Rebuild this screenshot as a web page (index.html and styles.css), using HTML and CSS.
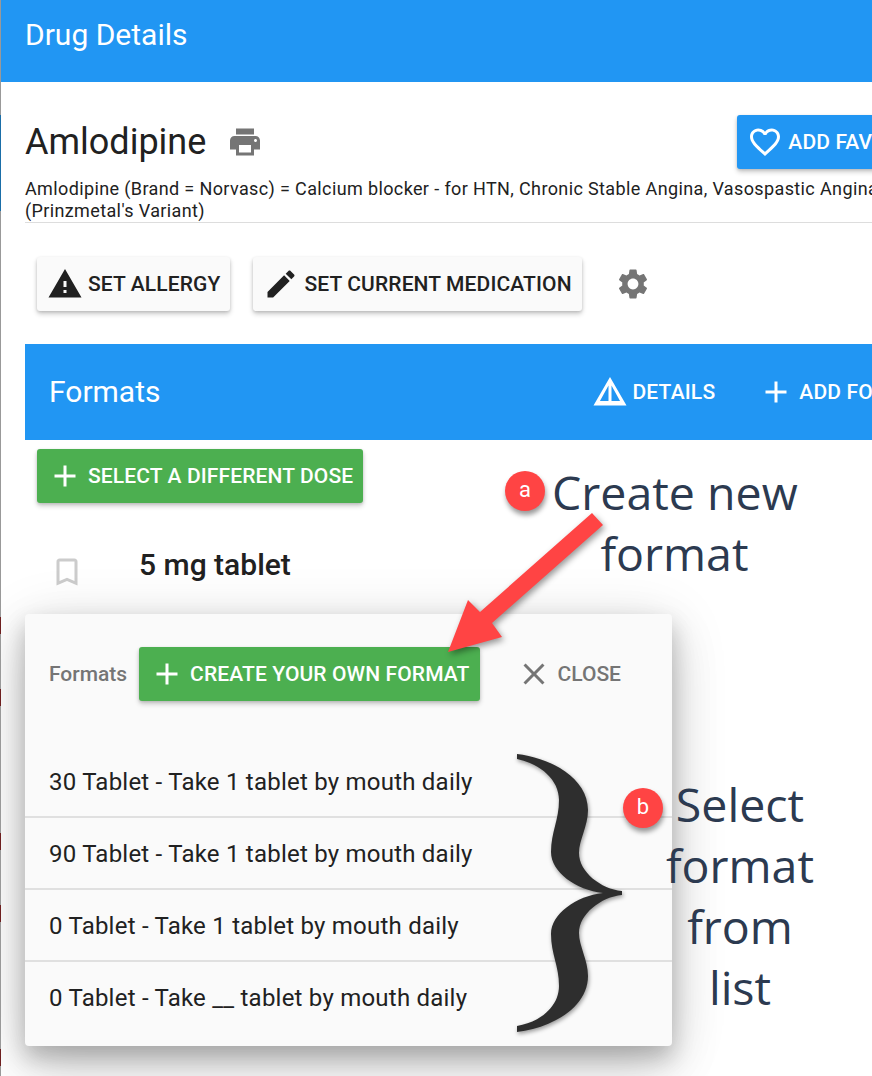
FILE: index.html
```html
<!DOCTYPE html>
<html lang="en">
<head>
    <meta charset="UTF-8">
    <title>Drug Details</title>
    <link rel="stylesheet" href="styles.css">
</head>
<body>
    <div class="page">
        <div class="header">Drug Details</div>

        <div class="content">
            <div class="title-row">
                <h1>Amlodipine</h1>
                <svg class="print-icon" viewBox="0 0 24 24"><path d="M19 8H5c-1.66 0-3 1.34-3 3v6h4v4h12v-4h4v-6c0-1.66-1.34-3-3-3zm-3 11H8v-5h8v5zm3-7c-.55 0-1-.45-1-1s.45-1 1-1 1 .45 1 1-.45 1-1 1zm-1-9H6v4h12V3z"/></svg>
                <button class="btn btn-blue btn-fav">
                    <svg viewBox="0 0 24 24"><path d="M16.5 3c-1.74 0-3.41.81-4.5 2.09C10.91 3.81 9.24 3 7.5 3 4.42 3 2 5.42 2 8.5c0 3.78 3.4 6.86 8.55 11.54L12 21.35l1.45-1.32C18.6 15.36 22 12.28 22 8.5 22 5.42 19.58 3 16.5 3zm-4.4 15.55l-.1.1-.1-.1C7.14 14.24 4 11.39 4 8.5 4 6.5 5.5 5 7.5 5c1.54 0 3.04.99 3.57 2.36h1.87C13.46 5.99 14.96 5 16.5 5c2 0 3.5 1.5 3.5 3.5 0 2.89-3.14 5.74-7.9 10.05z"/></svg>
                    ADD FAVORITE
                </button>
            </div>
            <p class="description">Amlodipine (Brand = Norvasc) = Calcium blocker - for HTN, Chronic Stable Angina, Vasospastic Angina<br>(Prinzmetal's Variant)</p>

            <div class="action-row">
                <button class="btn btn-light">
                    <svg viewBox="0 0 24 24"><path d="M1 21h22L12 2 1 21zm12-3h-2v-2h2v2zm0-4h-2v-4h2v4z"/></svg>
                    SET ALLERGY
                </button>
                <button class="btn btn-light">
                    <svg viewBox="0 0 24 24"><path d="M3 17.25V21h3.75L17.81 9.94l-3.75-3.75L3 17.25zM20.71 7.04c.39-.39.39-1.02 0-1.41l-2.34-2.34c-.39-.39-1.02-.39-1.41 0l-1.83 1.83 3.75 3.75 1.83-1.83z"/></svg>
                    SET CURRENT MEDICATION
                </button>
                <svg class="gear-icon" viewBox="0 0 24 24"><path d="M19.14 12.94c.04-.3.06-.61.06-.94 0-.32-.02-.64-.07-.94l2.03-1.58c.18-.14.23-.41.12-.61l-1.92-3.32c-.12-.22-.37-.29-.59-.22l-2.39.96c-.5-.38-1.03-.7-1.62-.94l-.36-2.54c-.04-.24-.24-.41-.48-.41h-3.84c-.24 0-.43.17-.47.41l-.36 2.54c-.59.24-1.13.57-1.62.94l-2.39-.96c-.22-.08-.47 0-.59.22L2.74 8.87c-.12.21-.08.47.12.61l2.03 1.58c-.05.3-.09.63-.09.94s.02.64.07.94l-2.03 1.58c-.18.14-.23.41-.12.61l1.92 3.32c.12.22.37.29.59.22l2.39-.96c.5.38 1.03.7 1.62.94l.36 2.54c.05.24.24.41.48.41h3.84c.24 0 .44-.17.47-.41l.36-2.54c.59-.24 1.13-.56 1.62-.94l2.39.96c.22.08.47 0 .59-.22l1.92-3.32c.12-.22.07-.47-.12-.61l-2.01-1.58zM12 15.6c-1.98 0-3.6-1.62-3.6-3.6s1.62-3.6 3.6-3.6 3.6 1.62 3.6 3.6-1.62 3.6-3.6 3.6z"/></svg>
            </div>

            <div class="formats-bar">
                <span class="formats-title">Formats</span>
                <span class="bar-action bar-details">
                    <svg viewBox="0 0 24 24"><path d="M12 2 1 21h22L12 2zm-1 5.6V18H5.3L11 7.6zm2 0L18.7 18H13V7.6z"/></svg>
                    DETAILS
                </span>
                <span class="bar-action bar-add">
                    <svg viewBox="0 0 24 24"><path d="M19 13h-6v6h-2v-6H5v-2h6V5h2v6h6v2z"/></svg>
                    ADD FORMAT
                </span>
            </div>

            <button class="btn btn-green btn-dose">
                <svg viewBox="0 0 24 24"><path d="M19 13h-6v6h-2v-6H5v-2h6V5h2v6h6v2z"/></svg>
                SELECT A DIFFERENT DOSE
            </button>

            <div class="dose-row">
                <svg class="bookmark-icon" viewBox="0 0 24 24"><path d="M17 3H7c-1.1 0-2 .9-2 2v16l7-3 7 3V5c0-1.1-.9-2-2-2zm0 15-5-2.18L7 18V5h10v13z"/></svg>
                <span class="dose-name">5 mg tablet</span>
            </div>
        </div>
    </div>

    <!-- popup de formatos -->
    <div class="popup">
        <div class="popup-head">
            <span class="popup-label">Formats</span>
            <button class="btn btn-green btn-create">
                <svg viewBox="0 0 24 24"><path d="M19 13h-6v6h-2v-6H5v-2h6V5h2v6h6v2z"/></svg>
                CREATE YOUR OWN FORMAT
            </button>
            <span class="popup-close">
                <svg viewBox="0 0 24 24"><path d="M19 6.41 17.59 5 12 10.59 6.41 5 5 6.41 10.59 12 5 17.59 6.41 19 12 13.41 17.59 19 19 17.59 13.41 12z"/></svg>
                CLOSE
            </span>
        </div>
        <ul class="format-list">
            <li>30 Tablet - Take 1 tablet by mouth daily</li>
            <li>90 Tablet - Take 1 tablet by mouth daily</li>
            <li>0 Tablet - Take 1 tablet by mouth daily</li>
            <li>0 Tablet - Take __ tablet by mouth daily</li>
        </ul>
    </div>

    <!-- anotaciones -->
    <span class="marker marker-a">a</span>
    <div class="note note-a">Create new<br>format</div>
    <svg class="arrow" viewBox="0 0 872 1076"><polygon points="592,513 480,612 468,600 448,652 502,637 492,623 603,525"/></svg>
    <svg class="brace" viewBox="0 0 108 278"><path d="M1 0C35 4 72 24 72 56C72 72 63 86 63 99C63 118 85 135 106 137L106 141C85 143 63 160 63 179C63 192 72 206 72 222C72 254 35 274 1 278L1 272C25 268 43 252 43 232C43 212 35 200 35 180C35 160 60 142 87 139C60 136 35 118 35 98C35 78 43 66 43 46C43 26 25 10 1 5Z"/></svg>
    <span class="marker marker-b">b</span>
    <div class="note note-b">Select<br>format<br>from<br>list</div>
</body>
</html>
```

FILE: styles.css
```css
/* Reset */
* {
    margin: 0;
    padding: 0;
    box-sizing: border-box;
    font-family: Roboto, Arial, sans-serif;
}

:root {
    --blue: #2196f3;
    --green: #4caf50;
    --red: #ff4444;
    --dark-text: #212121;
    --grey-text: #757575;
    --note-text: #2c3a50;
}

html,
body {
    width: 872px;
    height: 1076px;
    overflow: hidden;
    background-color: #ffffff;
}

body {
    position: relative;
}

/* Borde de la ventana de atras */
body::before {
    content: "";
    position: absolute;
    left: 0;
    top: 0;
    z-index: 1;
    width: 1px;
    height: 100%;
    background: linear-gradient(to bottom,
        #999999 0 115px, #1a6ea8 115px 211px, #999999 211px 617px,
        #6e1f1f 617px 634px, #999999 634px 689px,
        #6e1f1f 689px 706px, #999999 706px 833px,
        #6e1f1f 833px 850px, #999999 850px 905px,
        #6e1f1f 905px 922px, #999999 922px 1049px,
        #6e1f1f 1049px 1066px, #999999 1066px);
}

.page {
    width: 872px;
    height: 1076px;
    overflow: hidden;
    padding-left: 1px;
}

/* Header */
.header {
    height: 82px;
    padding: 17px 0 0 24px;
    background-color: var(--blue);
    color: #ffffff;
    font-size: 30px;
    line-height: 36px;
}

.content {
    padding: 33px 0 0 24px;
    width: 1100px;
}

.title-row {
    display: flex;
    align-items: center;
    height: 54px;
}

h1 {
    font-size: 36px;
    font-weight: 400;
    color: var(--dark-text);
}

.print-icon {
    width: 36px;
    height: 36px;
    margin-left: 21px;
    fill: #757575;
}

.description {
    height: 45px;
    margin-top: 9px;
    width: 847px;
    font-size: 18px;
    letter-spacing: 0.375px;
    line-height: 22px;
    color: var(--dark-text);
    border-bottom: 1px solid #dddddd;
    white-space: nowrap;
}

/* Botones */
.btn {
    display: inline-flex;
    align-items: center;
    height: 54px;
    padding: 0 10px;
    border: none;
    border-radius: 3px;
    font-size: 21px;
    font-weight: 500;
    letter-spacing: 0.12px;
    white-space: nowrap;
    box-shadow: 0 3px 5px rgba(0, 0, 0, 0.2), 0 1px 3px rgba(0, 0, 0, 0.12);
}

.btn svg {
    width: 36px;
    height: 36px;
    margin-right: 5px;
    fill: currentColor;
}

.btn-blue {
    background-color: var(--blue);
    color: #ffffff;
}

.btn-green {
    background-color: var(--green);
    color: #ffffff;
}

.btn-light {
    background-color: #fafafa;
    color: var(--dark-text);
}

.btn-fav {
    margin-left: 474px;
}

.action-row {
    display: flex;
    align-items: center;
    gap: 23px;
    margin-top: 34px;
    padding-left: 12px;
}

.gear-icon {
    width: 36px;
    height: 36px;
    margin-left: 10px;
    fill: #757575;
}

/* Barra de formatos */
.formats-bar {
    display: flex;
    align-items: center;
    width: 847px;
    height: 96px;
    margin-top: 33px;
    padding-left: 24px;
    background-color: var(--blue);
    color: #ffffff;
    white-space: nowrap;
    overflow: hidden;
}

.formats-title {
    padding-bottom: 2px;
    font-size: 30px;
}

.bar-action {
    display: inline-flex;
    align-items: center;
    font-size: 21px;
    font-weight: 500;
    letter-spacing: 0.18px;
}

.bar-action svg {
    width: 36px;
    height: 36px;
    margin-right: 4px;
    fill: currentColor;
}

.bar-details {
    margin-left: 432px;
}

.bar-add {
    margin-left: 43px;
}

.bar-add svg {
    margin-right: 5px;
}

.btn-dose {
    margin: 9px 0 0 12px;
}

.dose-row {
    display: flex;
    align-items: flex-start;
    margin-top: 51px;
    padding-left: 24px;
}

.bookmark-icon {
    width: 36px;
    height: 36px;
    fill: #cccccc;
}

.dose-name {
    margin: -7px 0 0 54px;
    font-size: 30px;
    font-weight: 500;
    color: var(--dark-text);
}

/* Popup */
.popup {
    position: absolute;
    left: 25px;
    top: 614px;
    width: 647px;
    height: 432px;
    border-radius: 4px;
    background-color: #fafafa;
    box-shadow: 0 11px 22px rgba(0, 0, 0, 0.2), 0 22px 50px rgba(0, 0, 0, 0.14), 0 8px 60px rgba(0, 0, 0, 0.12);
}

.popup-head {
    display: flex;
    align-items: center;
    height: 54px;
    margin-top: 33px;
    padding-left: 24px;
}

.popup-label {
    font-size: 21px;
    font-weight: 500;
    color: var(--grey-text);
}

.btn-create {
    margin-left: 12px;
}

.popup-close {
    display: inline-flex;
    align-items: center;
    margin-left: 36px;
    font-size: 21px;
    font-weight: 500;
    color: var(--grey-text);
}

.popup-close svg {
    width: 36px;
    height: 36px;
    margin-right: 6px;
    fill: currentColor;
}

.format-list {
    list-style: none;
    margin-top: 45px;
}

.format-list li {
    height: 72px;
    padding: 0 24px;
    font-size: 24px;
    letter-spacing: 0.225px;
    line-height: 72px;
    color: var(--dark-text);
    border-bottom: 2px solid #e0e0e0;
}

.format-list li:last-child {
    border-bottom: none;
}

/* Anotaciones */
.marker {
    position: absolute;
    width: 40px;
    height: 40px;
    border-radius: 50%;
    background-color: var(--red);
    color: #ffffff;
    font-size: 22px;
    line-height: 38px;
    text-align: center;
    box-shadow: 1px 4px 5px rgba(0, 0, 0, 0.4);
}

.marker-a {
    left: 505px;
    top: 471px;
}

.marker-b {
    left: 623px;
    top: 788px;
}

.note {
    position: absolute;
    font-family: "Open Sans", sans-serif;
    font-size: 46.5px;
    line-height: 61px;
    color: var(--note-text);
    text-align: center;
    white-space: nowrap;
}

.note-a {
    left: 552px;
    top: 462px;
    width: 245px;
}

.note-b {
    left: 654px;
    top: 774px;
    width: 172px;
}

.arrow {
    position: absolute;
    left: 0;
    top: 0;
    width: 872px;
    height: 1076px;
    fill: var(--red);
    filter: drop-shadow(2px 3px 3px rgba(0, 0, 0, 0.4));
    pointer-events: none;
}

.brace {
    position: absolute;
    left: 516px;
    top: 754px;
    width: 108px;
    height: 278px;
    fill: #2e2e2e;
    filter: drop-shadow(1px 2px 2px rgba(0, 0, 0, 0.4));
}
```
